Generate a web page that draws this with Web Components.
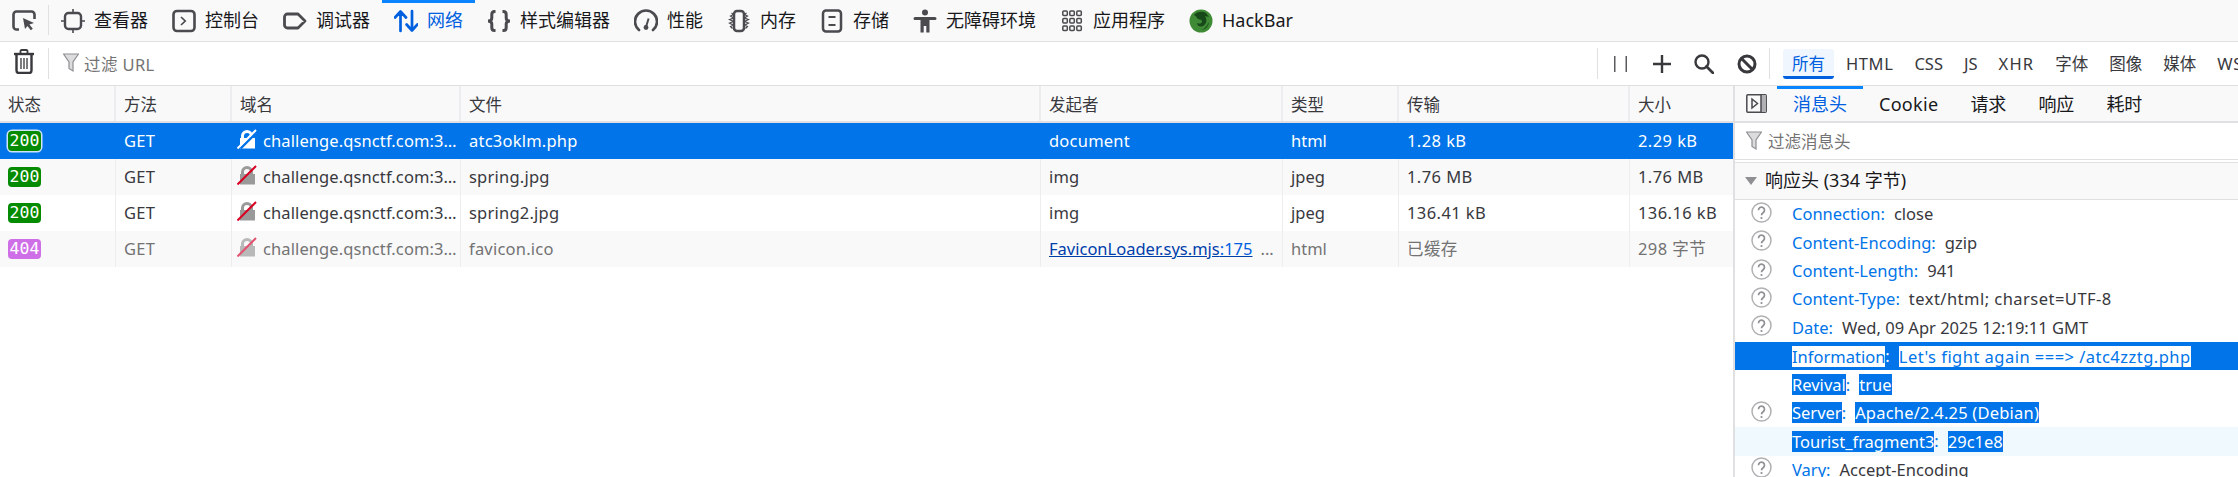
<!DOCTYPE html>
<html lang="zh"><head><meta charset="utf-8"><title>网络</title>
<style>
html,body{margin:0;padding:0;height:477px;width:2238px;overflow:hidden;background:#fff}
body{font:16.5px/1.2 "Noto Sans","Noto Sans CJK SC",sans-serif;color:#38383d}
svg{display:block}
</style></head><body>
<dt-app>
  <dt-tabbar slot="tabs">
    <svg slot="picker" width="24" height="21" viewBox="0 0 24 21" fill="none" stroke="#4a4a4f" stroke-width="2.6"><path d="M7 19.5H4.5a3 3 0 0 1-3-3v-12a3 3 0 0 1 3-3h15a3 3 0 0 1 3 3V9"/><path d="M11 8l11 5-4.6 1.6 3.4 4.2-2 1.5-3.3-4.4L13 19z" fill="#4a4a4f" stroke="none"/></svg>
    <dt-tab label="查看器"><svg slot="icon" width="24" height="24" viewBox="0 0 24 24" fill="none" stroke="#4a4a4f" stroke-width="2.4"><rect x="4" y="4" width="16" height="16" rx="3.5"/><path d="M12 0v4M12 20v4M0 12h4M20 12h4" stroke-width="1.6"/></svg></dt-tab>
    <dt-tab label="控制台"><svg slot="icon" width="24" height="24" viewBox="0 0 24 24" fill="none" stroke="#4a4a4f" stroke-width="2.6"><rect x="1.5" y="2" width="21" height="20" rx="3.5"/><path d="M9 8l4.2 4L9 16" stroke-width="1.7"/></svg></dt-tab>
    <dt-tab label="调试器"><svg slot="icon" width="24" height="24" viewBox="0 0 24 24" fill="none" stroke="#4a4a4f" stroke-width="2.8"><path d="M4.5 5H15l7 7-7 7H4.5a3 3 0 0 1-3-3V8a3 3 0 0 1 3-3z" stroke-linejoin="round"/></svg></dt-tab>
    <dt-tab label="网络" active><svg slot="icon" width="24" height="24" viewBox="0 0 24 24" fill="none" stroke="#0060df" stroke-width="2.7" stroke-linecap="round" stroke-linejoin="round"><path d="M6.5 22V3M1 8.5l5.5-6 5.5 6M18 2v19.5M12.6 15.5l5.4 6 5.4-6"/></svg></dt-tab>
    <dt-tab label="样式编辑器"><svg slot="icon" width="24" height="24" viewBox="0 0 24 24" fill="none" stroke="#4a4a4f" stroke-width="3"><path d="M8.500 2.500H7.500C5.300 2.500 4.800 3.500 4.800 5.500V9C4.800 11 3.800 12 1 12 3.800 12 4.800 13 4.800 15V18.500C4.800 20.500 5.300 21.500 7.500 21.500H8.500M15.500 2.500H16.500C18.700 2.500 19.200 3.500 19.200 5.500V9C19.200 11 20.200 12 23 12 20.200 12 19.200 13 19.200 15V18.500C19.200 20.500 18.700 21.500 16.500 21.500H15.500"/></svg></dt-tab>
    <dt-tab label="性能"><svg slot="icon" width="24" height="24" viewBox="0 0 24 24" fill="none" stroke="#4a4a4f" stroke-width="2.7"><path d="M5 21A11 11 0 1 1 19 21" stroke-linecap="round"/><circle cx="12" cy="18.500" r="2.400" fill="#4a4a4f" stroke="none"/><path d="M12 18l2.600-8.500" stroke-width="2"/></svg></dt-tab>
    <dt-tab label="内存"><svg slot="icon" width="24" height="24" viewBox="0 0 24 24" fill="none" stroke="#4a4a4f"><rect x="7" y="2" width="10" height="20" rx="3" stroke-width="2.500"/><path d="M4.500 4l2 1.500-3 1.500 3 2-4 1.500 4 2-4 1.500 3.500 2-2.500 1.500 2 2M19.500 4l-2 1.500 3 1.500-3 2 4 1.500-4 2 4 1.500-3.500 2 2.500 1.500-2 2" stroke-width="1.200"/></svg></dt-tab>
    <dt-tab label="存储"><svg slot="icon" width="24" height="24" viewBox="0 0 24 24" fill="none" stroke="#4a4a4f" stroke-width="2.500"><rect x="3" y="1.500" width="18" height="21" rx="3"/><path d="M8.500 8h7M8.500 16h7" stroke-width="1.800"/></svg></dt-tab>
    <dt-tab label="无障碍环境"><svg slot="icon" width="24" height="24" viewBox="0 0 24 24" fill="#4a4a4f"><circle cx="12" cy="3.500" r="3"/><path d="M2 8h20a1.200 1.200 0 0 1 0 3h-5.500v12.500h-3.200V17h-2.600v6.500H7.500V11H2a1.500 1.500 0 0 1 0-3z"/></svg></dt-tab>
    <dt-tab label="应用程序"><svg slot="icon" width="24" height="24" viewBox="0 0 24 24" fill="none" stroke="#4a4a4f" stroke-width="1.500"><rect x="2.800" y="2" width="4.500" height="4.500" rx="1"/><rect x="9.800" y="2" width="4.500" height="4.500" rx="1"/><rect x="16.800" y="2" width="4.500" height="4.500" rx="1"/><rect x="2.800" y="9.500" width="4.500" height="4.500" rx="1"/><rect x="9.800" y="9.500" width="4.500" height="4.500" rx="1"/><rect x="16.800" y="9.500" width="4.500" height="4.500" rx="1"/><rect x="2.800" y="17" width="4.500" height="4.500" rx="1"/><rect x="9.800" y="17" width="4.500" height="4.500" rx="1"/><rect x="16.800" y="17" width="4.500" height="4.500" rx="1"/></svg></dt-tab>
    <dt-tab label="HackBar"><svg slot="icon" width="24" height="24" viewBox="0 0 24 24"><circle cx="12" cy="12" r="11.500" fill="#3f8a35"/><path d="M5 6c3-4 9-4 12-2l3 4-4-1c2 3 2 8-2 10-3 1.500-6-.5-6-3 2 1 5 1 5-2 0-2-4-1-5-3-.7-1.500-1.500-2-3-3z" fill="#17481a"/><path d="M20 13c0 5-4 8-8 8 3-1 6-4 8-8z" fill="#1f5a20"/></svg></dt-tab>
  </dt-tabbar>
  <dt-toolbar slot="toolbar"></dt-toolbar>
  <net-table slot="table">
    <net-row status="200" selected domain="challenge.qsnctf.com:3…" file="atc3oklm.php" type="html" transfer="1.28 kB" size="2.29 kB">document</net-row>
    <net-row status="200" shade domain="challenge.qsnctf.com:3…" file="spring.jpg" type="jpeg" transfer="1.76 MB" size="1.76 MB">img</net-row>
    <net-row status="200" domain="challenge.qsnctf.com:3…" file="spring2.jpg" type="jpeg" transfer="136.41 kB" size="136.16 kB">img</net-row>
    <net-row status="404" shade dim domain="challenge.qsnctf.com:3…" file="favicon.ico" type="html" transfer="已缓存" size="298 字节"><init-link file="FaviconLoader.sys.mjs" line=":175"></init-link></net-row>
  </net-table>
  <side-panel slot="side">
    <hdr-row name="Connection" value="close" help></hdr-row>
    <hdr-row name="Content-Encoding" value="gzip" help></hdr-row>
    <hdr-row name="Content-Length" value="941" help></hdr-row>
    <hdr-row name="Content-Type" value="text/html; charset=UTF-8" help ls=".47"></hdr-row>
    <hdr-row name="Date" value="Wed, 09 Apr 2025 12:19:11 GMT" help></hdr-row>
    <hdr-row name="Information" value="Let's fight again ===> /atc4zztg.php" mode="current" ls=".47"></hdr-row>
    <hdr-row name="Revival" value="true" mode="sel"></hdr-row>
    <hdr-row name="Server" value="Apache/2.4.25 (Debian)" mode="sel" help ls=".2"></hdr-row>
    <hdr-row name="Tourist_fragment3" value="29c1e8" mode="sel" hover></hdr-row>
    <hdr-row name="Vary" value="Accept-Encoding" help></hdr-row>
  </side-panel>
</dt-app>
<script>
const def=(n,html,init)=>customElements.define(n,class extends HTMLElement{
  constructor(){super();this.attachShadow({mode:'open'});this.shadowRoot.innerHTML=html;}
  connectedCallback(){init&&init.call(this,this.shadowRoot)}
});
const FONT='"Noto Sans","Noto Sans CJK SC",sans-serif';

def('dt-app',`<style>
:host{display:grid;width:2238px;height:477px;overflow:hidden;grid-template-columns:1733px 505px;grid-template-rows:42px 44px 391px;font-family:${FONT}}
.a{grid-column:1/3}
</style>
<div class="a"><slot name="tabs"></slot></div>
<div class="a"><slot name="toolbar"></slot></div>
<slot name="table"></slot><slot name="side"></slot>`);

def('dt-tabbar',`<style>
:host{display:flex;height:42px;box-sizing:border-box;background:#f9f9fa;border-bottom:1px solid #e0e0e2;align-items:stretch}
.pick{width:48px;box-sizing:border-box;padding-left:12px;display:flex;align-items:center;height:41px}
.sep{width:1px;background:#e0e0e2;margin:5px 0 6px}
</style><div class="pick"><slot name="picker"></slot></div><div class="sep"></div><slot></slot>`);

def('dt-tab',`<style>
:host{display:flex;align-items:center;padding:0 12px;gap:9px;height:41px;box-sizing:border-box;font-size:18px;color:#18181a;white-space:nowrap;border-top:3px solid transparent}
:host([active]){border-top-color:#0a84ff;color:#0060df}
span{position:relative;top:-1px}
.i{width:24px;height:24px;flex:none;position:relative;top:-1px}
</style><div class="i"><slot name="icon"></slot></div><span></span>`,function(r){r.querySelector('span').textContent=this.getAttribute('label')});

def('dt-toolbar',`<style>
:host{display:flex;height:44px;box-sizing:border-box;border-bottom:1px solid #e0e0e2;background:#fff;align-items:center;font-size:16.5px;color:#38383d;white-space:nowrap}
.trash{width:48px;padding-left:14px;box-sizing:border-box}
.sep{width:1px;height:31px;background:#e0e0e2;flex:none}
.filter{flex:1;min-width:0;display:flex;align-items:center;gap:5px;padding-left:14px;color:#737373}
.filter span{letter-spacing:.4px;padding-top:2px}
.right{flex:none;width:640px;display:flex;align-items:center;overflow:hidden}
.b{flex:none;display:flex;justify-content:center}
.b1{margin-left:16px;width:13px}.b2{margin-left:26px;width:18px}.b3{margin-left:23px;width:20px}.b4{margin-left:23px;width:20px}
.g{display:flex;margin-left:12px;align-items:center;height:31px}
.g span{padding:0 9px;margin-right:3px;height:30px;line-height:30px;box-sizing:border-box;flex:none}
.g .on{background:#f0f6fe;color:#0060df;border-bottom:3px solid #0060df;border-radius:3px;margin-left:1px;margin-top:1px}
</style>
<div class="trash"><svg width="20" height="25" viewBox="0 0 20 25" fill="none" stroke="#38383d" stroke-width="2.200"><path d="M0 5h20" stroke-width="2.400"/><path d="M6.500 4.500V2.500A1.300 1.300 0 0 1 7.800 1h4.400a1.300 1.300 0 0 1 1.300 1.500v2" stroke-width="1.800"/><path d="M2.500 5v16.500A2.500 2.500 0 0 0 5 24h10a2.500 2.500 0 0 0 2.500-2.500V5" stroke-width="2.400"/><path d="M7 9v11M10 9v11M13 9v11" stroke-width="1.300"/></svg></div>
<div class="sep"></div>
<div class="filter"><svg width="16" height="20" viewBox="0 0 16 20"><path d="M.5 1h15L10 9v9l-4-2.500V9z" fill="#dcdcdc" stroke="#8f8f94" stroke-width="1.200"/></svg><span>过滤 URL</span></div>
<div class="sep"></div>
<div class="right">
  <div class="b b1"><svg width="13" height="16" viewBox="0 0 13 16" fill="#5a5a5f"><rect x="0" y="0" width="1.500" height="16"/><rect x="11.500" y="0" width="1.500" height="16"/></svg></div>
  <div class="b b2"><svg width="18" height="18" viewBox="0 0 18 18" stroke="#38383d" stroke-width="2.400"><path d="M0 9h18M9 0v18"/></svg></div>
  <div class="b b3"><svg width="20" height="20" viewBox="0 0 20 20" fill="none" stroke="#38383d" stroke-width="2.400"><circle cx="8" cy="8" r="6.500"/><path d="M12.500 12.500l6.500 6.500" stroke-linecap="round" stroke-width="2.800"/></svg></div>
  <div class="b b4"><svg width="20" height="20" viewBox="0 0 20 20" fill="none" stroke="#38383d" stroke-width="3"><circle cx="10" cy="10" r="8"/><path d="M4.500 4.500l11 11"/></svg></div>
  <div class="sep" style="margin-left:12px"></div>
  <div class="g"><span class="on">所有</span><span style="letter-spacing:.6px">HTML</span><span>CSS</span><span>JS</span><span style="letter-spacing:1.2px">XHR</span><span>字体</span><span>图像</span><span>媒体</span><span style="letter-spacing:.6px">WS</span></div>
</div>`);

const COLS='116px 116px 229px 580px 242px 116px 231px 103px';
def('net-table',`<style>
:host{display:block;font-size:16.5px;height:391px;overflow:hidden}
.h{display:grid;grid-template-columns:${COLS};height:37px;box-sizing:border-box;background:#f9f9fa;border-bottom:2px solid #e0e0e2}
.h div{padding-left:8px;line-height:37px;height:35px;overflow:hidden;border-right:2px solid #ededf0;box-sizing:border-box;color:#38383d}
.h div:last-child{border-right:0}
</style>
<div class="h"><div>状态</div><div>方法</div><div>域名</div><div>文件</div><div>发起者</div><div>类型</div><div>传输</div><div>大小</div></div>
<slot></slot>`);

const lock=(body,line,halo)=>`<svg width="20" height="20" viewBox="0 0 20 20"><path d="M4 9V7a6 6 0 0 1 12 0v2h2v10.500H3V9z M7 9h6V7a3 3 0 0 0-6 0z" fill="${body}" fill-rule="evenodd"/>${halo?`<path d="M3.500 19.500L21 2" stroke="${halo}" stroke-width="2.500"/>`:''}<path d="M0.500 19.500L19 1" stroke="${line}" stroke-width="2"/></svg>`;
def('net-row',`<style>
:host{display:grid;grid-template-columns:${COLS};height:36px;box-sizing:border-box;background:#fff;color:#38383d;font-size:16.5px;white-space:nowrap}
:host([shade]){background:#f9f9fa}
:host([selected]){background:#0074e8;color:#fff}
:host([dim]){color:#737373}
.c{padding-left:8px;border-right:1px solid #ededf0;box-sizing:border-box;display:flex;align-items:center;overflow:hidden;height:36px}
:host([selected]) .c{border-right-color:transparent}
.c:last-child{border-right:0}
.b{width:33px;height:20px;border-radius:4px;background:#058b00;color:#fff;font:16.5px/20px "DejaVu Sans Mono",monospace;text-align:center;flex:none}
.b.e{background:#cf6fe8}
:host([selected]) .b{box-shadow:0 0 0 1.500px #cfe4fb}
.d{gap:6px;padding-left:5px;letter-spacing:.1px}
.f,.g,.in{letter-spacing:.22px}
.x,.s{letter-spacing:.42px}
</style>
<div class="c"><div class="b"></div></div><div class="c g">GET</div>
<div class="c d"><span class="li"></span><span class="dn"></span></div><div class="c f"></div>
<div class="c in"><slot></slot></div><div class="c t"></div><div class="c x"></div><div class="c s"></div>`,function(r){
  const g=a=>this.getAttribute(a),q=s=>r.querySelector(s);
  q('.b').textContent=g('status'); if(g('status')=='404')q('.b').classList.add('e');
  q('.dn').textContent=g('domain');q('.f').textContent=g('file');q('.t').textContent=g('type');q('.x').textContent=g('transfer');q('.s').textContent=g('size');
  const sel=this.hasAttribute('selected'),dim=this.hasAttribute('dim');
  q('.li').innerHTML=sel?lock('#fff','#fff','#0074e8'):lock(dim?'#b9b9b9':'#9a9a9a',dim?'#e2536e':'#d70022');
});

def('init-link',`<style>
:host{display:inline-flex;gap:8px;letter-spacing:0}
u{color:#0060df;text-decoration-color:#003eaa}
b{font-weight:400;color:#003eaa}
</style><u><b></b><i style="font-style:normal"></i></u><span>...</span>`,function(r){
  r.querySelector('b').textContent=this.getAttribute('file');r.querySelector('i').textContent=this.getAttribute('line')});

def('side-panel',`<style>
:host{display:block;height:391px;overflow:hidden;border-left:2px solid #e0e0e2;box-sizing:border-box;font-size:16.5px;background:#fff}
.tabs{display:flex;height:37px;box-sizing:border-box;background:#f9f9fa;border-bottom:2px solid #e0e0e2;font-size:18px;color:#18181a;align-items:stretch}
.tg{width:42px;flex:none;padding-left:11px;box-sizing:border-box;display:flex;align-items:center}
.tabs span{padding:0 16px;line-height:31px;flex:none;white-space:nowrap;border-top:3px solid transparent;box-sizing:border-box}
.tabs .on{color:#0060df;border-top-color:#0a84ff}
.tabs .ck{letter-spacing:.3px}
.f{height:37px;display:flex;align-items:center;gap:6px;padding-left:11px;color:#737373;border-bottom:1px solid #e0e0e2;box-sizing:border-box}
.f span{padding-top:2px}
.h{margin-top:2px;height:38px;border-top:1px solid #e0e0e2;border-bottom:1px solid #e0e0e2;box-sizing:border-box;background:#f9f9fa;color:#18181a;display:flex;align-items:center;gap:8px;padding-left:10px;font-size:18px}
.tri{width:0;height:0;border:6px solid transparent;border-top:8px solid #8f8f94;border-bottom:0}
</style>
<div class="tabs"><div class="tg"><svg width="21" height="19" viewBox="0 0 21 19" fill="none" stroke="#4a4a4f" stroke-width="1.500"><rect x=".8" y=".8" width="19.400" height="17.400" rx="1"/><rect x="15" y="1" width="5" height="17" fill="#b1b1b3" stroke="none"/><path d="M15 1v17"/><path d="M6 5l5.500 4.500L6 14z"/></svg></div><span class="on">消息头</span><span class="ck">Cookie</span><span>请求</span><span>响应</span><span>耗时</span></div>
<div class="f"><svg width="16" height="20" viewBox="0 0 16 20"><path d="M.5 1h15L10 9v9l-4-2.500V9z" fill="#dcdcdc" stroke="#8f8f94" stroke-width="1.200"/></svg><span>过滤消息头</span></div>
<div class="h"><div class="tri"></div><div>响应头 (334 字节)</div></div>
<slot></slot>`);

const HELP=`<svg width="21" height="21" viewBox="0 0 21 21" fill="none" stroke="#b1b1b3"><circle cx="10.500" cy="10.500" r="9.500" stroke-width="1.500"/><path d="M7.500 8.200a3 3 0 1 1 4.600 2.500c-1 .7-1.600 1.200-1.600 2.600" stroke="#8f8f94" stroke-width="1.700"/><circle cx="10.500" cy="16" r="1.100" fill="#8f8f94" stroke="none"/></svg>`;
def('hdr-row',`<style>
:host{display:flex;align-items:center;height:28.400px;font-size:16.5px;white-space:nowrap;color:#38383d}
:host([mode=current]){background:#0074e8}
:host([hover]){background:#f0f9fe}
.i{width:57px;padding-left:16px;box-sizing:border-box;flex:none}
.n,.c{color:#0074e8}
.v{margin-left:9px;color:#38383d}
:host([mode=sel]) .n,:host([mode=sel]) .v{background:#0074e8;color:#fff;line-height:21px}
:host([mode=current]) .n,:host([mode=current]) .v{background:#fff;color:#0074e8;line-height:21px}
:host([mode=current]) .c{color:#fff}
</style><div class="i"></div><span class="n"></span><span class="c">:</span><span class="v"></span>`,function(r){
  r.querySelector('.n').textContent=this.getAttribute('name');
  const v=r.querySelector('.v');v.textContent=this.getAttribute('value');
  if(this.hasAttribute('ls'))v.style.letterSpacing=this.getAttribute('ls')+'px';
  if(this.hasAttribute('help'))r.querySelector('.i').innerHTML=HELP;
});
</script>
</body></html>
